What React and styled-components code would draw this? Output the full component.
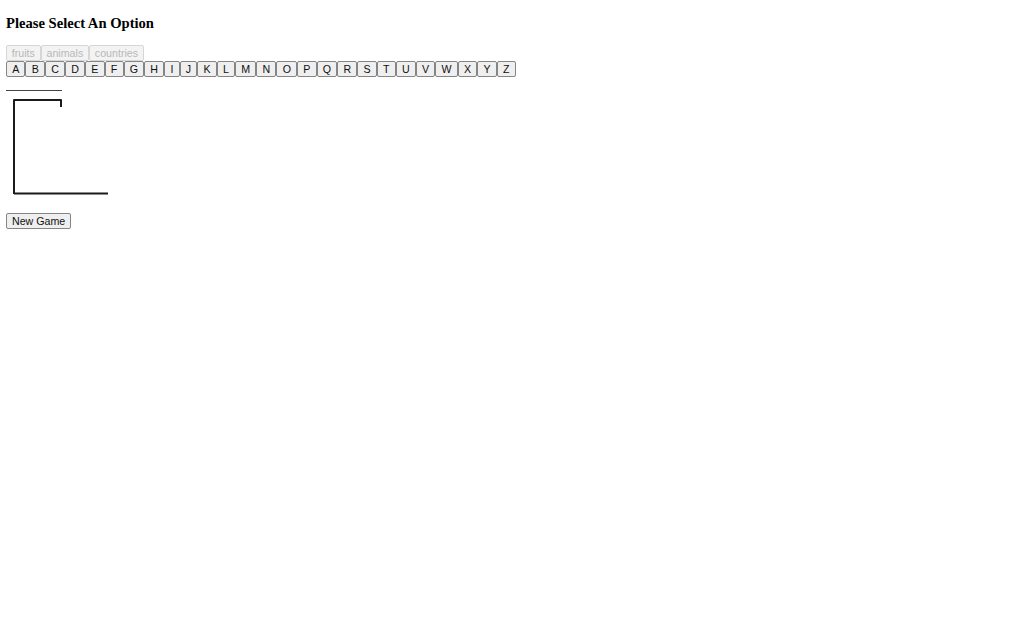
import React from "react";
import styled, { createGlobalStyle } from "styled-components";

const Global = createGlobalStyle`
  html, body { margin: 0; padding: 0; background: #fff; }
  body { font-family: "Liberation Serif", "Times New Roman", serif; color: #000; }
`;

const Page = styled.div`
  padding: 0 6px;
`;

const Title = styled.h3`
  margin: 14.5px 0 13px;
  font-family: "Liberation Serif", "Times New Roman", serif;
  font-weight: bold;
  font-size: 14.6px;
  line-height: 17px;
`;

const Row = styled.div`
  display: flex;
  align-items: stretch;
  height: 16px;
`;

const Btn = styled.button`
  box-sizing: border-box;
  height: 16px;
  margin: 0;
  padding: 0 ${(p) => p.$pad || 5.2}px;
  font-family: "Liberation Sans", Arial, sans-serif;
  font-size: 10.67px;
  line-height: 14px;
  border-radius: 2px;
  border: 1px solid ${(p) => (p.disabled ? "#d6d6d6" : "#858585")};
  background: ${(p) => (p.disabled ? "#f3f3f3" : "#efefef")};
  color: ${(p) => (p.disabled ? "#b8b8b8" : "#111")};
  cursor: default;
`;

const Word = styled.div`
  width: 56px;
  height: 0;
  border-bottom: 1px solid #444;
  margin-top: 13.5px;
`;

const Gallows = styled.svg`
  display: block;
  margin-top: 3.5px;
`;

const NewGame = styled(Btn)`
  margin-top: 16.5px;
  padding: 0 5px;
  display: block;
`;

const categories = ["fruits", "animals", "countries"];
const letters = "ABCDEFGHIJKLMNOPQRSTUVWXYZ".split("");

export default function App() {
  return (
    <>
      <Global />
      <Page>
        <Title>Please Select An Option</Title>
        <Row>
          {categories.map((c) => (
            <Btn key={c} disabled $pad={4.8}>
              {c}
            </Btn>
          ))}
        </Row>
        <Row>
          {letters.map((l) => (
            <Btn key={l}>{l}</Btn>
          ))}
        </Row>
        <Word />
        <Gallows width="120" height="102" viewBox="0 0 120 102">
          <polyline
            points="8,99 8,5 55,5 55,12"
            fill="none"
            stroke="#1a1a1a"
            strokeWidth="2"
            strokeLinejoin="round"
          />
          <line x1="8" y1="98.5" x2="102" y2="98.5" stroke="#1a1a1a" strokeWidth="2" />
        </Gallows>
        <NewGame>New Game</NewGame>
      </Page>
    </>
  );
}
